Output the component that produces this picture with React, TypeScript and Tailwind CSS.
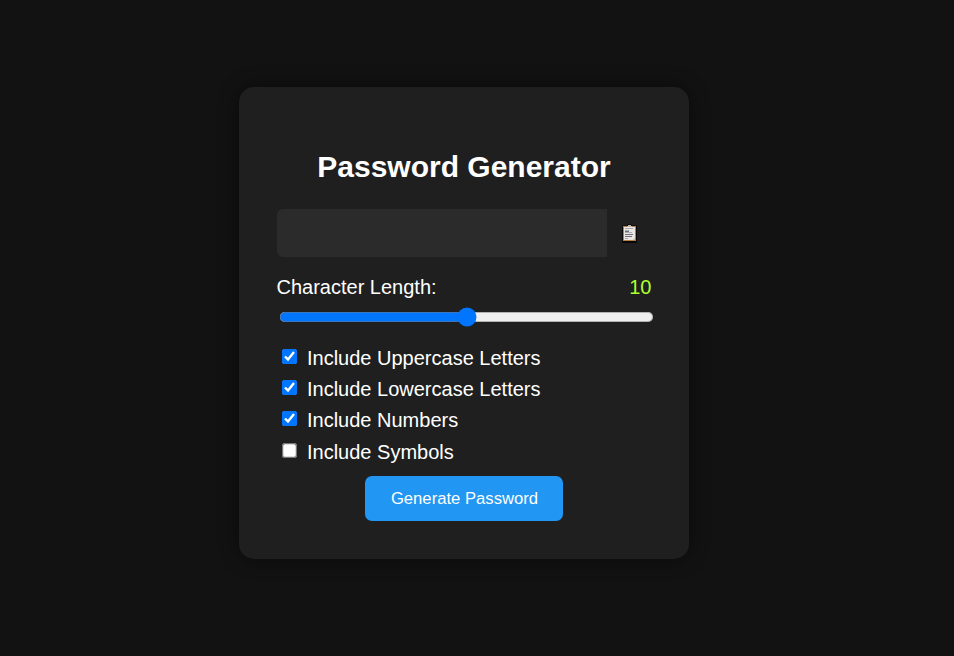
import { useState } from "react";

const initialOptions = [
  { label: "Include Uppercase Letters", checked: true },
  { label: "Include Lowercase Letters", checked: true },
  { label: "Include Numbers", checked: true },
  { label: "Include Symbols", checked: false },
];

function ClipboardIcon() {
  return (
    <svg width="15" height="19" viewBox="0 0 15 19" aria-hidden="true">
      <path d="M.6 1.6H5L6 .2h3l1 1.4h4.4q.6 0 .6.6v16.2q0 .6-.6.6H.6q-.6 0-.6-.6V2.2q0-.6.6-.6z" fill="#080808" />
      <rect x="1" y="2" width="13" height="15" fill="#b57e4f" />
      <rect x="2" y="3" width="11" height="13" fill="#e9e5e3" />
      <path d="M5 3V2h1V1h3v1h1v1z" fill="#b9b5b1" />
      <path d="M3 4.5h8M3 6.5h4M3 8.5h7M3 14.5h3" stroke="#aaaaaf" />
      <path d="M3 7.5h4M3 10.5h8M3 12.5h7" stroke="#707178" />
      <path d="M13 14v2h-2z" fill="#d7b99a" />
    </svg>
  );
}

export default function App() {
  const [length, setLength] = useState(10);
  const [options, setOptions] = useState(initialOptions);

  return (
    <main className="h-[656px] overflow-hidden bg-[#121212] pt-[87px] pl-[239px] font-['Liberation_Sans',Arial,sans-serif] text-xl text-white">
      <section className="flex h-[472px] w-[450px] flex-col rounded-[15px] bg-[#1f1f1f] px-[37.5px] pt-[63px] shadow-[0_0_20px_rgba(0,0,0,0.45)]">
        <h1 className="text-center text-[30px] leading-[34px] font-bold">Password Generator</h1>
        <div className="mt-[25px] flex h-12 items-center">
          <input readOnly aria-label="Password" className="h-12 w-[330px] rounded-l-[6px] bg-[#2b2b2b] px-3 outline-none" />
          <button aria-label="Copy password" className="flex h-12 w-[45px] items-center pt-px pl-[15.5px]">
            <ClipboardIcon />
          </button>
        </div>
        <div className="mt-[18px] flex h-6 items-center justify-between">
          <span>Character Length:</span>
          <span className="text-[#adff2f]">{length}</span>
        </div>
        <input
          type="range"
          min="0"
          max="20"
          value={length}
          aria-label="Character length"
          onChange={(e) => setLength(Number(e.target.value))}
          className="mt-[6.4px] ml-[2px] h-4 w-[300px] shrink-0 accent-[#0075ff] [zoom:1.25]"
        />
        <div className="mt-[15.2px] flex flex-col pl-[5px]">
          {options.map((option, i) => (
            <label key={option.label} className="flex h-[31.25px] items-center gap-[10.5px]">
              <input
                type="checkbox"
                checked={option.checked}
                onChange={() => setOptions(options.map((o, j) => (j === i ? { ...o, checked: !o.checked } : o)))}
                className="mb-[2.5px] size-3 shrink-0 accent-[#0075ff] [zoom:1.25]"
              />
              <span>{option.label}</span>
            </label>
          ))}
        </div>
        <button className="mt-[8.8px] h-[45px] w-[198px] shrink-0 self-center rounded-[7px] bg-[#2196f3] pl-px text-[16.67px]">
          Generate Password
        </button>
      </section>
    </main>
  );
}
